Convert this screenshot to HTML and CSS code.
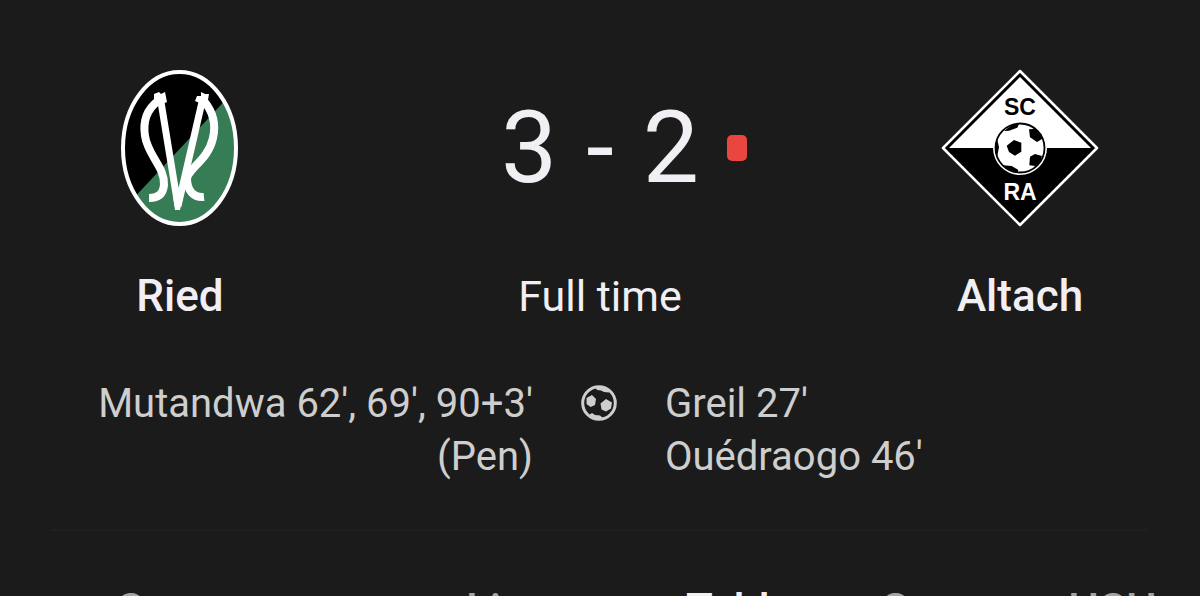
FILE: index.html
```html
<!DOCTYPE html>
<html lang="en">
<head>
<meta charset="utf-8">
<title>Ried 3 - 2 Altach</title>
<link rel="stylesheet" href="styles.css">
</head>
<body>
<main class="match">
  <section class="scoreboard">
    <div class="team">
      <svg class="crest" viewBox="0 0 160 160" role="img" aria-label="Ried crest">
        <defs><clipPath id="ried"><ellipse cx="79.500" cy="80" rx="56" ry="75"/></clipPath></defs>
        <g clip-path="url(#ried)">
          <path d="M0 0H160V160H0Z" fill="#000"/>
          <path d="M30 134L133 24H160V160H30Z" fill="#367c54"/>
        </g>
        <ellipse cx="79.500" cy="80" rx="56.500" ry="76" fill="none" stroke="#fff" stroke-width="4"/>
        <g fill="none" stroke="#fff">
          <path d="M58 33C46 42 43 55 45 68C48 88 65 99 64 117C63 127 57 130 49 130" stroke-width="8"/>
          <path d="M104 33C114 45 116 57 113 70C108 92 90 99 87 110C87 123 94 130 104 129" stroke-width="8"/>
          <path d="M61 34L78 138L102 34" stroke-width="7"/>
        </g>
        <path d="M54 26L59 24L61 26L65 24L67 34L60 37L54 33ZM101 24L105 26L109 26L108 32L104 37L95 33L97 28L101 28ZM73 128H83L80 142H75Z" fill="#fff"/>
      </svg>
      <h2 class="name">Ried</h2>
    </div>
    <div class="result">
      <div class="score">
        <span>3</span><span>-</span><span>2</span>
        <i class="red-card" role="img" aria-label="Red card"></i>
      </div>
      <p class="status">Full time</p>
    </div>
    <div class="team">
      <svg class="crest" viewBox="0 0 160 160" role="img" aria-label="Altach crest">
        <path d="M80 3L157 80L80 157L3 80Z" fill="#000" stroke="#fff" stroke-width="2.500" stroke-linejoin="round"/>
        <path d="M80 9L151 80H9Z" fill="#fff"/>
        <circle cx="80" cy="80" r="27" fill="#fff"/>
        <circle cx="80" cy="80" r="24.500" fill="#fff" stroke="#000" stroke-width="1.800"/>
        <path d="M66.700 77.700L74 72L81.300 74.700V83.700L75 87.700L69 84ZM89 61.300L96 60.700L102 67V71L97 74L90 69.300ZM90 88.700L95 86L102 88L100.300 93.700L95.700 98L89.300 97.300ZM64 63L72.300 56.500L79 56L77.300 59.700L69 62.700ZM63.300 97.300L71.700 98L78.300 102L77.700 104.300L70 103ZM57 70.300L59 79.300L57 89.300L55 80Z" fill="#000"/>
        <g class="crest-text"><text x="80" y="47" fill="#000">SC</text><text x="80" y="132" fill="#fff">RA</text></g>
      </svg>
      <h2 class="name">Altach</h2>
    </div>
  </section>
  <section class="scorers" aria-label="Goals">
    <p class="home">Mutandwa 62', 69', 90+3' (Pen)</p>
    <svg class="ball" viewBox="0 0 36 36" role="img" aria-label="Goals">
      <circle cx="18" cy="18" r="16.300" fill="none" stroke="#cecece" stroke-width="3"/>
      <path d="M5.500 13L11 10L15 14L14 20L9.500 22L5.500 19ZM19.500 18.500L25 14L31 17.500L30 23.500L25 26.500L20.500 24.500ZM14 2H22L28 5V7.500L23 7L20 5.500L16 5ZM8 30L11 28L14 30L19 30.500L22 33L17 35Z" fill="#cecece"/>
    </svg>
    <ul class="away"><li>Greil 27'</li><li>Ouédraogo 46'</li></ul>
  </section>
  <nav class="tabs">
    <a href="#summary">Summary</a>
    <a href="#lineups">Lineups</a>
    <a href="#table" class="active" aria-current="page">Table</a>
    <a href="#games">Games</a>
    <a href="#hsh">HSH</a>
  </nav>
</main>
</body>
</html>
```
FILE: styles.css
```css
* { box-sizing: border-box; }
body {
  margin: 0;
  height: 100vh;
  overflow: hidden;
  background: #1b1b1b;
  color: #f1eff3;
  font-family: Roboto, "Liberation Sans", sans-serif;
}
h2, p, ul { margin: 0; padding: 0; list-style: none; }
.scoreboard {
  display: grid;
  grid-template-columns: 3fr 4fr 3fr;
  padding: 68px 0 0;
}
.team, .result { display: flex; flex-direction: column; align-items: center; }
.crest { width: 160px; height: 160px; display: block; }
.crest-text { font: bold 23px "Liberation Sans", sans-serif; text-anchor: middle; }
.name, .status { margin-top: 40px; line-height: 56px; }
.name { font-size: 44px; font-weight: 500; }
.status { font-size: 43px; font-weight: 400; }
.score {
  position: relative;
  display: flex;
  align-items: center;
  justify-content: center;
  gap: 29px;
  height: 160px;
  font-size: 100px;
  line-height: 116px;
}
.red-card {
  position: absolute;
  left: 100%;
  margin-left: 28px;
  width: 20px;
  height: 26px;
  border-radius: 5px;
  background: #ea4640;
}
.scorers {
  display: grid;
  grid-template-columns: 1fr 36px 1fr;
  column-gap: 48px;
  margin: 0 53px 0 51px;
  padding: 53px 0 46px;
  border-bottom: 2px solid #1f1f1f;
  color: #cecece;
  font-size: 40px;
  line-height: 53px;
}
.home { padding-left: 40px; text-align: right; }
.ball { width: 36px; height: 36px; margin-top: 8px; }
.tabs {
  display: grid;
  grid-template-columns: 349fr 220fr 194fr 188fr 132fr;
  padding: 53px 0 0 117px;
  font-size: 44px;
  line-height: 52px;
}
.tabs a { color: #a4a4a4; text-decoration: none; font-weight: 500; }
.tabs .active { color: #f1eff3; }
```
